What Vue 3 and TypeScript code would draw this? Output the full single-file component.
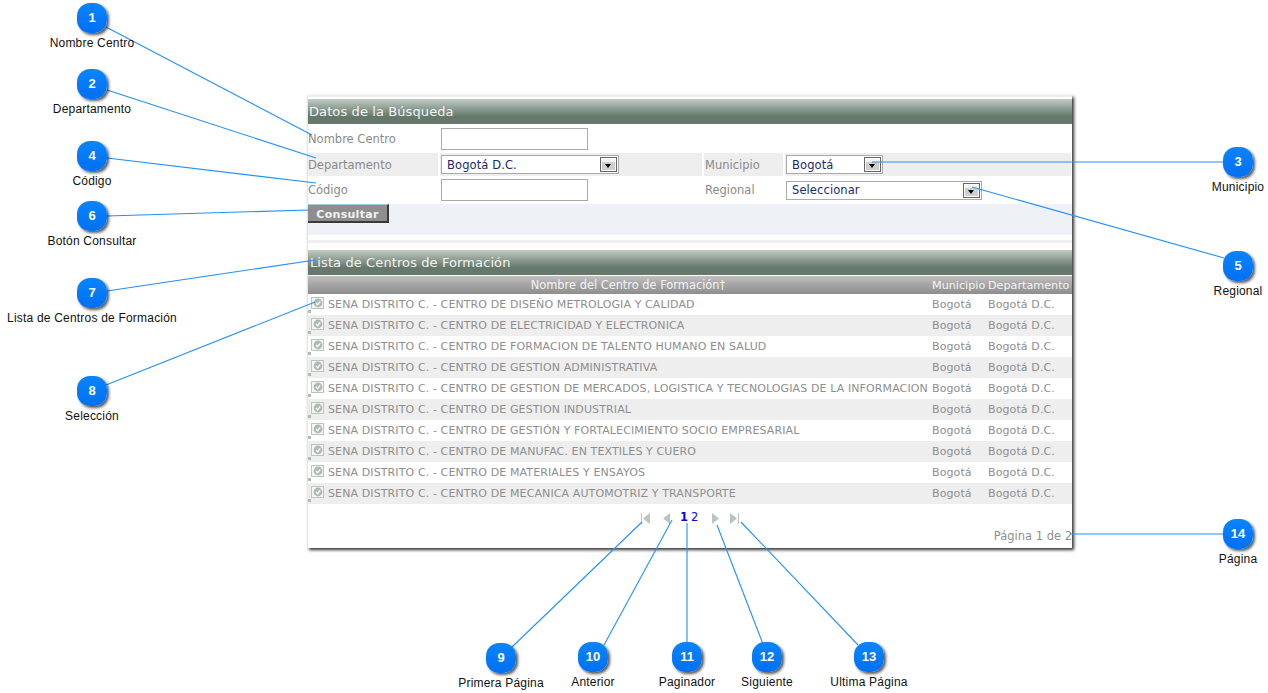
<template>
  <div class="page">
    <div class="panel">
      <div class="section-title">Datos de la Búsqueda</div>
      <div class="form">
        <div class="form-row row-first">
          <div class="cell label">Nombre Centro</div>
          <div class="cell"><input class="text-input" type="text" /></div>
          <div class="cell"></div>
          <div class="cell"></div>
        </div>
        <div class="form-row row-shaded">
          <div class="cell label">Departamento</div>
          <div class="cell">
            <div class="fake-select sel-dep">
              <span>Bogotá D.C.</span>
              <i class="arrow"></i>
            </div>
          </div>
          <div class="cell label label-2">Municipio</div>
          <div class="cell">
            <div class="fake-select sel-mun">
              <span>Bogotá</span>
              <i class="arrow"></i>
            </div>
          </div>
        </div>
        <div class="form-row row-third">
          <div class="cell label">Código</div>
          <div class="cell"><input class="text-input" type="text" /></div>
          <div class="cell label label-2">Regional</div>
          <div class="cell">
            <div class="fake-select sel-reg">
              <span>Seleccionar</span>
              <i class="arrow"></i>
            </div>
          </div>
        </div>
      </div>
      <div class="button-row">
        <button class="btn" type="button">Consultar</button>
      </div>
      <div class="divider"></div>
      <div class="section-title list-title">Lista de Centros de Formación</div>
      <table class="grid">
        <colgroup>
          <col class="col-check" />
          <col />
          <col class="col-mun" />
          <col class="col-dep" />
        </colgroup>
        <thead>
          <tr>
            <th colspan="2" class="th-name">Nombre del Centro de Formación†</th>
            <th>Municipio</th>
            <th>Departamento</th>
          </tr>
        </thead>
        <tbody>
          <tr v-for="(c, i) in centros" :key="c" :class="{ alt: i % 2 === 1 }">
            <td class="td-check">
              <svg class="check-icon" width="17" height="21" viewBox="0 0 17 21">
                <rect x="3.5" y="3.5" width="12" height="11" fill="#f4f6f4" stroke="#b9c6bb" />
                <circle cx="10" cy="9" r="4.4" fill="#aebbb0" />
                <path d="M8 9l1.6 1.7L12.2 7.4" fill="none" stroke="#fff" stroke-width="1.3" />
                <rect x="0" y="16" width="3" height="3" fill="#aebbb0" />
              </svg>
            </td>
            <td>{{ c }}</td>
            <td>Bogotá</td>
            <td>Bogotá D.C.</td>
          </tr>
        </tbody>
      </table>
      <div class="pager">
        <svg class="pg" width="11" height="11" viewBox="0 0 11 11"><path d="M1 0h1v11H1zM10 0v11L3 5.5z" /></svg>
        <svg class="pg prev" width="11" height="11" viewBox="0 0 11 11"><path d="M9 0v11L2 5.5z" /></svg>
        <b class="num">1</b>
        <span class="num">2</span>
        <svg class="pg next" width="11" height="11" viewBox="0 0 11 11"><path d="M2 0v11l7-5.5z" /></svg>
        <svg class="pg" width="11" height="11" viewBox="0 0 11 11"><path d="M1 0v11l7-5.5zM9 0h1v11H9z" /></svg>
      </div>
      <div class="page-info">Página 1 de 2</div>
    </div>

    <svg class="lines" width="1268" height="693" viewBox="0 0 1268 693">
      <line v-for="(l, i) in lines" :key="i" :x1="l[0]" :y1="l[1]" :x2="l[2]" :y2="l[3]" />
    </svg>

    <div v-for="n in callouts" :key="n.id" class="callout" :style="{ left: n.x + 'px', top: n.y + 'px' }">
      <div class="bubble">{{ n.id }}</div>
      <div class="callout-label">{{ n.label }}</div>
    </div>
  </div>
</template>

<script setup lang="ts">
const centros = [
  'SENA DISTRITO C. - CENTRO DE DISEÑO METROLOGIA Y CALIDAD',
  'SENA DISTRITO C. - CENTRO DE ELECTRICIDAD Y ELECTRONICA',
  'SENA DISTRITO C. - CENTRO DE FORMACION DE TALENTO HUMANO EN SALUD',
  'SENA DISTRITO C. - CENTRO DE GESTION ADMINISTRATIVA',
  'SENA DISTRITO C. - CENTRO DE GESTION DE MERCADOS, LOGISTICA Y TECNOLOGIAS DE LA INFORMACION',
  'SENA DISTRITO C. - CENTRO DE GESTION INDUSTRIAL',
  'SENA DISTRITO C. - CENTRO DE GESTIÓN Y FORTALECIMIENTO SOCIO EMPRESARIAL',
  'SENA DISTRITO C. - CENTRO DE MANUFAC. EN TEXTILES Y CUERO',
  'SENA DISTRITO C. - CENTRO DE MATERIALES Y ENSAYOS',
  'SENA DISTRITO C. - CENTRO DE MECANICA AUTOMOTRIZ Y TRANSPORTE'
]

const callouts = [
  { id: 1, x: 92, y: 18, label: 'Nombre Centro' },
  { id: 2, x: 92, y: 84, label: 'Departamento' },
  { id: 3, x: 1238, y: 162, label: 'Municipio' },
  { id: 4, x: 92, y: 156, label: 'Código' },
  { id: 5, x: 1238, y: 266, label: 'Regional' },
  { id: 6, x: 92, y: 216, label: 'Botón Consultar' },
  { id: 7, x: 92, y: 293, label: 'Lista de Centros de Formación' },
  { id: 8, x: 92, y: 391, label: 'Selección' },
  { id: 9, x: 501, y: 658, label: 'Primera Página' },
  { id: 10, x: 593, y: 657, label: 'Anterior' },
  { id: 11, x: 687, y: 657, label: 'Paginador' },
  { id: 12, x: 767, y: 657, label: 'Siguiente' },
  { id: 13, x: 869, y: 657, label: 'Ultima Página' },
  { id: 14, x: 1238, y: 534, label: 'Página' }
]

const lines = [
  [106, 27, 312, 135],
  [107, 90, 316, 158],
  [1224, 162, 872, 162],
  [107, 158, 316, 183],
  [1224, 258, 972, 187],
  [107, 216, 309, 210],
  [107, 291, 315, 260],
  [106, 385, 315, 302],
  [512, 647, 642, 522],
  [604, 645, 672, 520],
  [687, 643, 687, 523],
  [763, 644, 717, 525],
  [858, 645, 741, 522],
  [1224, 534, 1070, 534]
]
</script>

<style>
html, body {
  margin: 0;
  background: #fff;
}
</style>

<style scoped>
.page {
  position: relative;
  width: 1268px;
  height: 693px;
  overflow: hidden;
  background: #fff;
  padding-top: 95px;
  box-sizing: border-box;
  font-family: "DejaVu Sans", Verdana, sans-serif;
}
.panel {
  margin-left: 307px;
  width: 765px;
  height: 453px;
  box-sizing: border-box;
  background: #fff;
  border-left: 1px solid #e6e6e6;
  border-top: 2px solid #eeeeee;
  padding-top: 2px;
  box-shadow: 2px 2px 3px #333;
  font-size: 11.5px;
  color: #8a8a8a;
}
.section-title {
  height: 25px;
  line-height: 26px;
  padding-left: 1px;
  font-size: 13px;
  letter-spacing: 0.1px;
  color: #f2f4f2;
  background: linear-gradient(#c2ccc5 0, #8b9a90 40%, #66786b 70%, #66786b 100%);
}
.form-row {
  display: grid;
  grid-template-columns: 130px 262px 79px 286px;
  column-gap: 2px;
  align-items: stretch;
}
.row-first { height: 29px; padding-top: 1px; box-sizing: border-box; }
.row-shaded { height: 23px; }
.row-third { height: 28px; }
.cell {
  display: flex;
  align-items: center;
}
.row-shaded .cell {
  background: #eeeeee;
}
.label {
  color: #8a8a8a;
}
.label-2 {
  padding-left: 1px;
}
.text-input {
  width: 147px;
  height: 22px;
  box-sizing: border-box;
  border: 1px solid #aaa;
  background: #fff;
  margin: 0 0 0 1px;
  padding: 0;
}
.fake-select {
  display: flex;
  align-items: center;
  justify-content: space-between;
  height: 19px;
  box-sizing: border-box;
  margin-left: 1px;
  border: 1px solid #aaa;
  background: #fff;
  padding: 0 1px 0 5px;
  color: #1a2a6a;
  letter-spacing: 0.1px;
}
.sel-dep { width: 178px; }
.sel-mun { width: 97px; }
.sel-reg { width: 196px; }
.arrow {
  position: relative;
  display: block;
  width: 17px;
  height: 15px;
  box-sizing: border-box;
  border: 1px solid #666;
  background: linear-gradient(#f4f4f4 0, #f4f4f4 30%, #cfcfcf 30%, #cfcfcf 100%);
  box-shadow: inset 0 0 0 1px #fff;
}
.arrow::after {
  content: "";
  position: absolute;
  left: 4px;
  top: 6px;
  border-left: 3.5px solid transparent;
  border-right: 3.5px solid transparent;
  border-top: 4px solid #000;
}
.button-row {
  height: 31px;
  background: #eef1f6;
}
.btn {
  display: block;
  width: 81px;
  height: 19px;
  box-sizing: border-box;
  margin: 0;
  padding: 2px 0 0;
  border: 0;
  border-top: 1px solid #a8c8dc;
  border-right: 2px solid #3a3a3a;
  border-bottom: 2px solid #3a3a3a;
  background: #8e8e8e;
  color: #f2f2f2;
  font: bold 11px "DejaVu Sans", Verdana, sans-serif;
  letter-spacing: 0.3px;
}
.divider {
  height: 3px;
  margin-top: 5px;
  background: #eeeeee;
}
.list-title {
  margin-top: 7px;
  padding-left: 2px;
}
.grid {
  width: 764px;
  table-layout: fixed;
  border-collapse: collapse;
  margin-top: 1px;
  font-size: 11px;
  letter-spacing: 0.11px;
}
.col-check { width: 20px; }
.col-mun { width: 56px; }
.col-dep { width: 84px; }
.grid th {
  height: 18px;
  padding: 0;
  font-weight: normal;
  font-size: 11.2px;
  letter-spacing: 0;
  color: #f4f4f4;
  white-space: nowrap;
  background: linear-gradient(#c0c0c0 0, #a4a4a4 50%, #8e8e8e 100%);
  text-align: left;
}
.grid th.th-name {
  font-size: 11.4px;
  text-align: center;
  padding-left: 16px;
}
.grid td {
  height: 21px;
  padding: 0;
  white-space: nowrap;
  color: #8e8e8e;
}
.grid tr.alt td {
  background: #eeeeee;
}
.td-check {
  vertical-align: top;
}
.check-icon {
  display: block;
}
.pager {
  display: flex;
  align-items: center;
  height: 27px;
  padding-left: 332px;
  padding-top: 1px;
  font-size: 11.5px;
  box-sizing: border-box;
}
.pg {
  fill: #b9c6bb;
  flex: none;
}
.prev { margin-left: 10px; }
.num {
  color: #0000ee;
  margin-left: 3px;
  margin-bottom: 2px;
}
.pager b.num { margin-left: 8px; margin-right: 0; }
.next { margin-left: 12px; }
.next + .pg { margin-left: 8px; }
.page-info {
  text-align: right;
  height: 18px;
  line-height: 11px;
  font-size: 11.5px;
  color: #8f8f8f;
}
.lines {
  position: absolute;
  left: 0;
  top: 0;
  pointer-events: none;
}
.lines line {
  stroke: #2090ff;
  stroke-width: 1.1;
}
.callout {
  position: absolute;
  width: 0;
  display: flex;
  flex-direction: column;
  align-items: center;
  margin-top: -15px;
}
.bubble {
  flex: none;
  width: 30px;
  height: 30px;
  border-radius: 13px;
  background: linear-gradient(#0a84ff, #0070f0);
  box-shadow: 2px 2px 3px rgba(0, 0, 0, 0.65);
  color: #fff;
  font: bold 13px/30px "Liberation Sans", Arial, sans-serif;
  text-align: center;
}
.callout-label {
  margin-top: 3px;
  white-space: nowrap;
  font: 12px/14px "Liberation Sans", Arial, sans-serif;
  letter-spacing: 0.2px;
  color: #111;
}
</style>
